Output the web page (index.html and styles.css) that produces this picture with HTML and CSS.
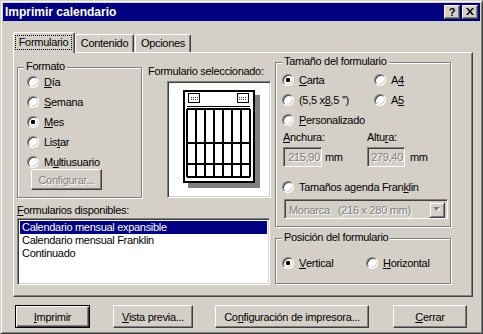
FILE: index.html
```html
<!DOCTYPE html>
<html lang="es">
<head>
	<meta charset="UTF-8">
	<title>Imprimir calendario</title>
	<link rel="stylesheet" href="styles.css">
</head>
<body>

<div class="window">
	<div class="titlebar">
		<span class="title">Imprimir calendario</span>
		<span class="tbtn help">?</span>
		<span class="tbtn close">
			<svg width="8" height="7" viewBox="0 0 8 7"><path d="M0 0h2l2 2.4 2-2.4h2l-3 3.5 3 3.5h-2l-2-2.4-2 2.4h-2l3-3.5z" fill="#000"/></svg>
		</span>
	</div>

	<div class="tabs">
		<div class="tab active"><span class="focus">Formulario</span></div>
		<div class="tab tab-cont">Contenido</div>
		<div class="tab tab-opc">Opciones</div>
	</div>

	<div class="panel">
		<div class="col-left">
			<div class="top-row">
				<div class="group formato">
					<div class="legend">Formato</div>
					<div class="radios">
						<div class="radio"><span class="dot"></span><u>D</u>ía</div>
						<div class="radio"><span class="dot"></span><u>S</u>emana</div>
						<div class="radio on"><span class="dot"></span><u>M</u>es</div>
						<div class="radio"><span class="dot"></span>Lis<u>t</u>ar</div>
						<div class="radio"><span class="dot"></span>M<u>u</u>ltiusuario</div>
					</div>
					<div class="btn disabled config">Confi<u>g</u>urar...</div>
				</div>
				<div class="preview">
					<div class="label">Formulario seleccionado:</div>
					<div class="preview-box">
						<svg width="100" height="113" viewBox="0 0 100 113">
							<defs>
								<pattern id="dots" width="2" height="2" patternUnits="userSpaceOnUse">
									<rect width="1" height="1" fill="#404040"/>
								</pattern>
							</defs>
							<rect x="19" y="12" width="72" height="93" fill="#808080"/>
							<rect x="15" y="8" width="70" height="91" fill="#fff" stroke="#000" stroke-width="2"/>
							<g stroke="#000" stroke-width="1" fill="#fff">
								<rect x="19.5" y="10.5" width="11" height="9"/>
								<rect x="68.5" y="10.5" width="11" height="9"/>
							</g>
							<rect x="21" y="14" width="8" height="4" fill="url(#dots)"/>
							<rect x="70" y="14" width="8" height="4" fill="url(#dots)"/>
							<g stroke="#000" stroke-width="1.6" fill="none">
								<path d="M18 23.5h63M18 26h63"/>
								<path d="M18 26v68M27 26v68M36 26v68M45 26v68M54 26v68M63 26v68M72 26v68M81 26v68"/>
								<path d="M18 60h63M18 81h63M18 94h63"/>
							</g>
						</svg>
					</div>
				</div>
			</div>
			<div class="label list-label"><u>F</u>ormularios disponibles:</div>
			<ul class="listbox">
				<li class="sel">Calendario mensual expansible</li>
				<li>Calendario mensual Franklin</li>
				<li>Continuado</li>
			</ul>
		</div>

		<div class="col-right">
			<div class="group tamano">
				<div class="legend">Tamaño del formulario</div>
				<div class="radios">
					<div class="pair">
						<div class="radio on c1"><span class="dot"></span><u>C</u>arta</div>
						<div class="radio"><span class="dot"></span>A<u>4</u></div>
					</div>
					<div class="pair">
						<div class="radio c1"><span class="dot"></span>(5,5 x <u>8</u>,5 '')</div>
						<div class="radio"><span class="dot"></span>A<u>5</u></div>
					</div>
					<div class="radio"><span class="dot"></span><u>P</u>ersonalizado</div>
				</div>
				<div class="dims">
					<div class="dim dim-w">
						<div class="label"><u>A</u>nchura:</div>
						<div class="field-row"><span class="field w1">215,90</span><span class="unit">mm</span></div>
					</div>
					<div class="dim">
						<div class="label">Altu<u>r</u>a:</div>
						<div class="field-row"><span class="field w2">279,40</span><span class="unit">mm</span></div>
					</div>
				</div>
				<div class="radio franklin"><span class="dot"></span>Tamaños agenda Fran<u>k</u>lin</div>
				<div class="select">
					<span class="select-text">Monarca&nbsp;&nbsp;&nbsp;(216 x 280 mm)</span>
					<span class="select-btn">
						<svg width="8" height="5" viewBox="0 0 8 5"><path d="M1 1h7l-3.5 4z" fill="#fff"/><path d="M0 0h7l-3.5 4z" fill="#808080"/></svg>
					</span>
				</div>
			</div>
			<div class="group posicion">
				<div class="legend">Posición del formulario</div>
				<div class="pair pos-row">
					<div class="radio on c2"><span class="dot"></span><u>V</u>ertical</div>
					<div class="radio"><span class="dot"></span><u>H</u>orizontal</div>
				</div>
			</div>
		</div>
	</div>

	<div class="buttons">
		<div class="btn default b-imp"><u>I</u>mprimir</div>
		<div class="btn b-vista"><u>V</u>ista previa...</div>
		<div class="btn b-conf">Co<u>n</u>figuración de impresora...</div>
		<div class="btn b-cerrar"><u>C</u>errar</div>
	</div>
</div>

</body>
</html>
```

FILE: styles.css
```css
body {
	margin: 0;
	font-family: "Liberation Sans", Arial, sans-serif;
	font-size: 11px;
	letter-spacing: -0.3px;
	color: #000;
}
ul {
	margin: 0;
	padding: 0;
	list-style: none;
}
u {
	text-underline-offset: 1px;
}
.window {
	width: 483px;
	height: 334px;
	box-sizing: border-box;
	background-color: #d4d0c8;
	border: 1px solid;
	border-color: #d4d0c8 #404040 #404040 #d4d0c8;
	box-shadow: inset 1px 1px #fff, inset -1px -1px #808080;
	padding: 2px;
}
.titlebar {
	height: 18px;
	background-color: #000080;
	display: flex;
	align-items: center;
	padding-left: 2px;
}
.title {
	flex: 1;
	color: #fff;
	font-weight: bold;
	font-size: 12px;
	letter-spacing: 0;
	line-height: 18px;
}
.tbtn {
	width: 16px;
	height: 14px;
	box-sizing: border-box;
	background-color: #d4d0c8;
	border: 1px solid;
	border-color: #fff #404040 #404040 #fff;
	box-shadow: inset -1px -1px #808080;
	display: flex;
	align-items: center;
	justify-content: center;
	font-weight: bold;
	font-size: 11px;
	letter-spacing: 0;
	line-height: 12px;
}
.help {
	margin-right: 2px;
}
.close {
	margin-right: 2px;
}
.close svg {
	display: block;
	margin: 0 1px 1px 0;
}

/* pestañas */
.tabs {
	display: flex;
	align-items: flex-end;
	margin: 11px 0 0 10px;
	height: 20px;
}
.tab {
	box-sizing: border-box;
	height: 18px;
	border: 1px solid;
	border-bottom: none;
	border-color: #fff #404040 #404040 #fff;
	border-radius: 2px 2px 0 0;
	box-shadow: inset -1px 0 #808080;
	text-align: center;
	padding-top: 2px;
	line-height: 13px;
	background-color: #d4d0c8;
}
.tab.active {
	width: 62px;
	height: 21px;
	margin-bottom: -1px;
	padding-top: 1px;
	position: relative;
	z-index: 1;
}
.tab-cont {
	width: 59px;
}
.tab-opc {
	width: 56px;
	margin-left: 1px;
}
.focus {
	display: block;
	margin: 1px 2px 0 1px;
	border: 1px dotted #000;
	line-height: 13px;
}

.panel {
	margin-left: 10px;
	width: 460px;
	height: 245px;
	box-sizing: border-box;
	border: 1px solid;
	border-color: #fff #404040 #404040 #fff;
	box-shadow: inset -1px -1px #808080;
	display: flex;
	align-items: flex-start;
}
.col-left {
	width: 254px;
	margin-left: 3px;
}
.col-right {
	width: 176px;
	margin-left: 4px;
}
.top-row {
	display: flex;
	align-items: flex-start;
}
.label {
	line-height: 13px;
	white-space: nowrap;
}

/* grupos */
.group {
	box-sizing: border-box;
	border: 1px solid #808080;
	box-shadow: inset 1px 1px #fff, 1px 1px #fff;
}
.legend {
	width: fit-content;
	margin: -8px 0 0 6px;
	padding: 0 2px;
	line-height: 13px;
	background-color: #d4d0c8;
	white-space: nowrap;
}
.radios {
	display: flex;
	flex-direction: column;
	gap: 6px;
}
.radio {
	display: flex;
	align-items: center;
	height: 14px;
	white-space: nowrap;
}
.dot {
	flex: none;
	width: 12px;
	height: 12px;
	box-sizing: border-box;
	border-radius: 50%;
	border: 1px solid;
	border-color: #808080 #fff #fff #808080;
	background: #fff;
	box-shadow: inset 1px 1px #404040, inset -1px -1px #d4d0c8;
	margin-right: 5px;
}
.radio.on .dot {
	background: radial-gradient(circle, #000 0 2px, #fff 2.4px);
}
.pair {
	display: flex;
}

.formato {
	width: 125px;
	height: 131px;
	margin-top: 14px;
	padding-left: 9px;
}
.formato .legend {
	margin-left: -3px;
}
.formato .radios {
	margin-top: 2px;
}
.btn {
	box-sizing: border-box;
	height: 23px;
	border: 1px solid;
	border-color: #fff #404040 #404040 #fff;
	box-shadow: inset -1px -1px #808080;
	display: flex;
	align-items: center;
	justify-content: center;
	white-space: nowrap;
}
.btn.disabled {
	color: #808080;
	text-shadow: 1px 1px #fff;
}
.config {
	width: 71px;
	height: 21px;
	margin-left: 4px;
}

.preview {
	margin: 12px 0 0 6px;
	width: 123px;
}
.preview-box {
	width: 104px;
	height: 117px;
	box-sizing: border-box;
	margin: 3px 0 0 19px;
	background-color: #fff;
	border: 1px solid;
	border-color: #808080 #fff #fff #808080;
	box-shadow: inset 1px 1px #404040, inset -1px -1px #d4d0c8;
	padding: 1px;
}
.preview-box svg {
	display: block;
	shape-rendering: crispEdges;
}

.list-label {
	margin-top: 6px;
}
.listbox {
	margin-top: 1px;
	width: 253px;
	height: 67px;
	box-sizing: border-box;
	background-color: #fff;
	border: 1px solid;
	border-color: #808080 #fff #fff #808080;
	box-shadow: inset 1px 1px #404040, inset -1px -1px #d4d0c8;
	padding: 2px 2px 0 2px;
}
.listbox li {
	line-height: 13px;
	padding-left: 2px;
	white-space: nowrap;
}
.listbox li.sel {
	background-color: #000080;
	color: #fff;
}

/* tamaño */
.tamano {
	margin-top: 9px;
	height: 165px;
	padding-left: 6px;
}
.tamano .legend {
	margin-left: 0;
}
.tamano .radios {
	margin-top: 5px;
}
.c1 {
	width: 92px;
}
.dims {
	display: flex;
	margin-top: 4px;
}
.dim-w {
	width: 84px;
	padding-left: 1px;
}
.field-row {
	display: flex;
	align-items: center;
	margin-top: 3px;
}
.field {
	box-sizing: border-box;
	height: 20px;
	border: 1px solid;
	border-color: #808080 #fff #fff #808080;
	box-shadow: inset 1px 1px #404040, inset -1px -1px #d4d0c8;
	color: #808080;
	text-shadow: 1px 1px #fff;
	text-align: right;
	padding-right: 1px;
	line-height: 18px;
}
.w1 {
	width: 39px;
}
.w2 {
	width: 38px;
}
.unit {
	margin-left: 3px;
}
.dim .w2 + .unit {
	margin-left: 5px;
}
.franklin {
	margin-top: 13px;
}
.select {
	margin: 5px 0 0 2px;
	width: 164px;
	height: 20px;
	box-sizing: border-box;
	border: 1px solid;
	border-color: #808080 #fff #fff #808080;
	box-shadow: inset 1px 1px #404040, inset -1px -1px #d4d0c8;
	padding: 2px 2px 1px 2px;
	display: flex;
	align-items: center;
}
.select-text {
	flex: 1;
	padding-left: 2px;
	color: #808080;
	text-shadow: 1px 1px #fff;
	white-space: nowrap;
}
.select-btn {
	width: 16px;
	height: 16px;
	box-sizing: border-box;
	border: 1px solid;
	border-color: #d4d0c8 #404040 #404040 #d4d0c8;
	box-shadow: inset 1px 1px #fff, inset -1px -1px #808080;
	display: flex;
	align-items: center;
	justify-content: center;
}
.select-btn svg {
	display: block;
}

/* posición */
.posicion {
	margin-top: 11px;
	height: 46px;
	padding-left: 6px;
}
.posicion .legend {
	margin-left: 0;
}
.pos-row {
	margin-top: 12px;
}
.c2 {
	width: 84px;
}

/* botones */
.buttons {
	display: flex;
	margin: 8px 0 0 12px;
}
.btn.default {
	border-color: #000;
	box-shadow: inset 1px 1px #fff, inset -1px -1px #404040, inset -2px -2px #808080;
}
.b-imp {
	width: 75px;
}
.b-vista {
	width: 80px;
	margin-left: 23px;
}
.b-conf {
	width: 154px;
	margin-left: 22px;
}
.b-cerrar {
	width: 74px;
	margin-left: 24px;
}
```
